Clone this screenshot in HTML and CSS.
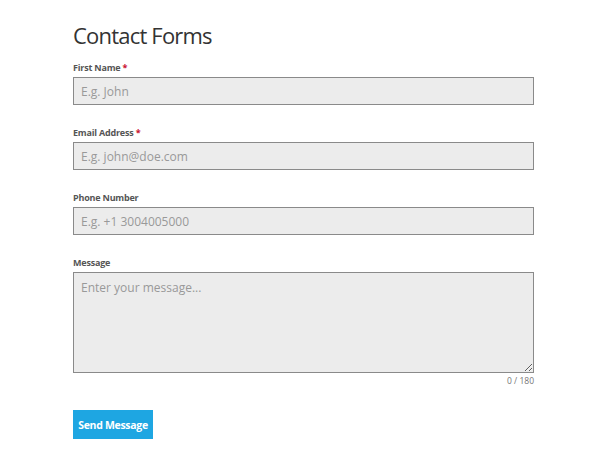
FILE: index.html
```html
<!DOCTYPE html>
<html lang="en">
<head>
  <meta charset="UTF-8">
  <meta name="viewport" content="width=device-width, initial-scale=1.0">
  <title>Contact Forms</title>
  <link rel="stylesheet" href="styles.css">
</head>
<body>
  <div class="wrap">
    <h1 class="title">Contact Forms</h1>

    <form class="contact-form" onsubmit="return false;">
      <div class="field">
        <label class="label" for="fname">First Name <span class="req">*</span></label>
        <input class="input" id="fname" type="text" placeholder="E.g. John">
      </div>

      <div class="field">
        <label class="label" for="email">Email Address <span class="req">*</span></label>
        <input class="input" id="email" type="email" placeholder="E.g. john@doe.com">
      </div>

      <div class="field">
        <label class="label" for="phone">Phone Number</label>
        <input class="input" id="phone" type="text" placeholder="E.g. +1 3004005000">
      </div>

      <div class="field field-msg">
        <label class="label" for="msg">Message</label>
        <textarea class="input textarea" id="msg" maxlength="180" placeholder="Enter your message..."></textarea>
        <p class="counter">0 / 180</p>
      </div>

      <button class="send-button" type="submit">Send Message</button>
    </form>
  </div>

  <script>
    const msg = document.querySelector('#msg');
    const counter = document.querySelector('.counter');
    msg.addEventListener('input', function(){
      counter.innerHTML = `${msg.value.length} / 180`;
    });
  </script>
</body>
</html>
```

FILE: styles.css
```css
body{
  margin: 0;
  background-color: white;
  font-family: "Open Sans", "Noto Sans", Arial, sans-serif;
  color: #333;
}
.wrap{
  width: 461px;
  margin-left: 73px;
  padding-top: 20px;
}
.title{
  margin: 0 0 12px 0;
  font-size: 22px;
  font-weight: normal;
  letter-spacing: -0.8px;
  color: #333;
  line-height: 30px;
}
.field{
  display: flex;
  flex-direction: column;
  margin-bottom: 22px;
}
.label{
  font-size: 9px;
  font-weight: bold;
  color: #555;
  line-height: 12px;
  margin-bottom: 3px;
  letter-spacing: -0.2px;
}
.req{
  color: #c8102e;
}
.input{
  box-sizing: border-box;
  width: 100%;
  height: 28px;
  margin: 0;
  padding: 0 7px;
  border: 1px solid #8a8a8a;
  border-radius: 0;
  background-color: #ececec;
  font-family: "Open Sans", "Noto Sans", Arial, sans-serif;
  font-size: 12px;
  color: #333;
}
.input::placeholder{
  color: #999;
}
.textarea{
  height: 101px;
  padding: 6px 7px;
  resize: vertical;
}
.field-msg{
  margin-bottom: 23px;
}
.counter{
  margin: 2px 0 0 0;
  line-height: 12px;
  text-align: right;
  font-size: 8.5px;
  color: #777;
}
.send-button{
  width: 80px;
  height: 29px;
  border: none;
  background-color: #1ea6e2;
  color: white;
  font-family: "Open Sans", "Noto Sans", Arial, sans-serif;
  font-size: 10.5px;
  font-weight: bold;
  letter-spacing: -0.3px;
  cursor: pointer;
  padding: 0;
}
```
